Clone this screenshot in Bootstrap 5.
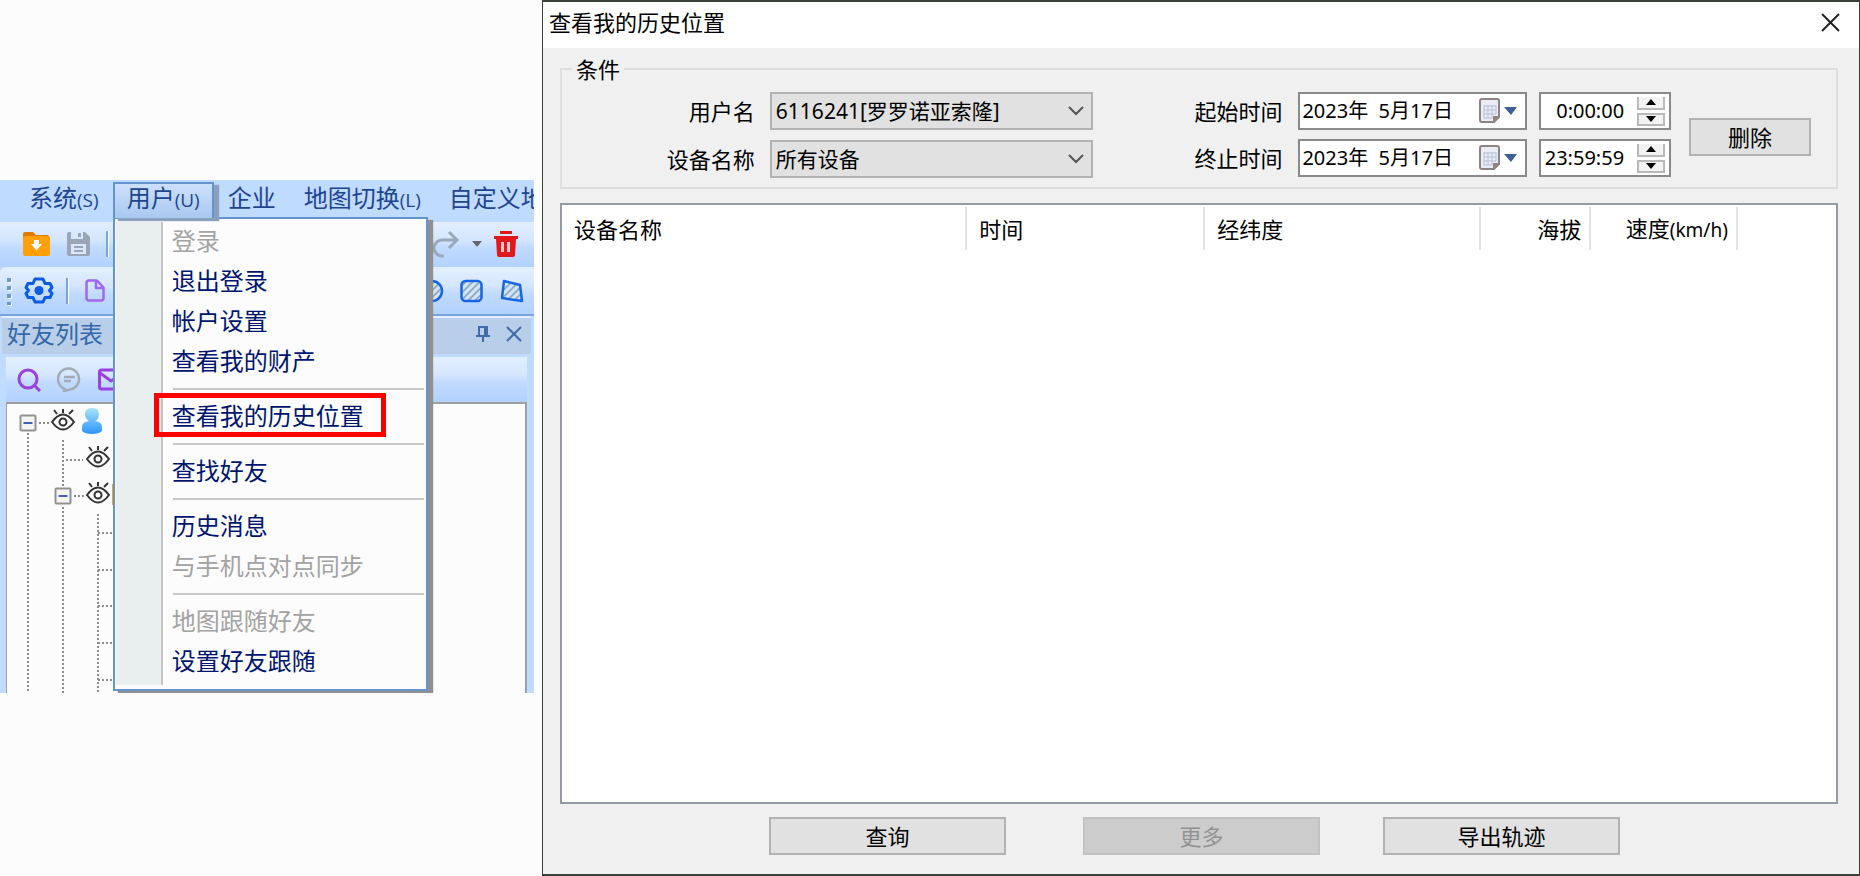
<!DOCTYPE html>
<html lang="zh-CN">
<head>
<meta charset="utf-8">
<meta name="viewport" content="width=device-width, initial-scale=1">
<title>查看我的历史位置</title>
<link href="https://cdn.jsdelivr.net/npm/bootstrap@5.3.0/dist/css/bootstrap.min.css" rel="stylesheet">
<style>
  body { background: #fcfcfc; color: #000; font: 22px/30px "Noto Sans", "Noto Sans CJK SC", sans-serif; }
  button { padding: 0; border: 0; background: none; color: inherit; line-height: 1; }
  svg { display: block; }
  .workspace { display: grid; grid-template-columns: 534fr 1318fr; column-gap: 8px; min-height: 100vh; }

  /* main application window */
  .app-pane { margin-top: 180px; overflow: hidden; align-self: start; background: #bfdbff; font-size: 24px; }
  .menubar { height: 42px; padding-left: 15px; list-style: none; color: #1f4590; }
  .menubar > li { position: relative; flex: none; height: 42px; }
  .menubar .top-link { display: block; height: 36px; margin-top: 2px; padding: 0 14px; line-height: 32px; color: inherit; text-decoration: none; white-space: nowrap; }
  .menubar small { font: 19px "Open Sans", sans-serif; }
  .menubar .open { position: relative; z-index: 6; background: linear-gradient(#cfe1fb, #a9c8f0); box-shadow: inset 2px 2px #6593cf, inset -2px 0 #6593cf, 5px 3px 1px #8ba0bd; }
  .user-menu { position: absolute; z-index: 5; top: 37px; left: 0; width: 315px; padding: 2px 2px 8px; border: 2px solid #6593cf; background: #fcfcfc; box-shadow: 5px 3px 1px #909090; list-style: none; }
  .user-menu::before { content: ""; position: absolute; top: 3px; bottom: 4px; left: 1px; width: 47px; background: #e9eeee; border-right: 2px solid #c5c5c5; }
  .user-menu li { position: relative; }
  .user-menu button { display: block; width: 100%; height: 40px; padding-left: 55px; text-align: left; color: #00156e; }
  .user-menu button:disabled { color: #a3a3a3; }
  .user-menu .rule { height: 2px; margin: 7px 0 6px 56px; background: #c8c8c8; }
  .user-menu .marked { position: absolute; inset: -3px 38px -1px 37px; border: 5px solid #f00; pointer-events: none; }
  .toolstrip { background: linear-gradient(#e3efff, #d5e6ff 40%, #c2dbff 55%, #b1d2ff); }
  .strip-a { height: 45px; padding: 0 16px 2px 22px; }
  .strip-b { height: 49px; padding: 0 10px 0 6px; border-bottom: 2px solid #79a3dc; border-radius: 6px 0 0 0; }
  .divider { width: 3px; height: 26px; border-left: 2px solid #7ba3da; border-right: 1px solid #fff; }
  .panel-title { height: 38px; margin: 0 3px 0 2px; padding: 0 9px 4px 5px; border-top: 2px solid #e3efff; background: #b8cee9; color: #3468a8; line-height: 30px; }
  .panel-title h2 { font-size: 24px; line-height: 30px; }
  .panel-body { padding: 3px 7px 0 6px; }
  .panel-tools { height: 45px; padding-left: 11px; }
  .tree-box { height: 291px; border: 2px solid #a0a0a0; border-width: 2px 2px 0 1px; background: #fcfcfc; overflow: hidden; }

  /* history dialog */
  .dialog { display: flex; flex-direction: column; min-width: 0; background: #f0f0f0; border: 1px solid #3c413c; border-top-width: 2px; border-bottom-width: 2px; }
  .titlebar { height: 46px; padding: 0 19px 6px 6px; background: #fff; }
  .titlebar h1 { font-size: 22px; line-height: 30px; }
  .dialog-body { padding: 10px 21px 19px 17px; }
  fieldset.criteria { padding: 12px 0 9px; border: 2px solid #dedede; }
  .criteria legend { float: none; width: auto; margin: 0 0 0 10px; padding: 0 4px; font-size: 22px; line-height: 22px; }
  .criteria-grid { display: grid; grid-template-columns: 531fr 579fr 165fr; }
  .pick-grid { display: grid; grid-template-columns: 193fr 323fr; gap: 10px 15px; }
  .span-grid { display: grid; grid-template-columns: 194fr 229fr 132fr; gap: 8px 12px; }
  .pick-grid label, .span-grid label { text-align: right; line-height: 38px; white-space: nowrap; }
  .span-grid label { padding-right: 4px; }
  .win-select { height: 38px; min-width: 0; padding: 0 36px 0 4px; border: 2px solid #b2b2b2; border-radius: 0; color: #000; font-size: 21px; line-height: 30px;
    background: #e1e1e1 url("data:image/svg+xml,%3Csvg xmlns='http://www.w3.org/2000/svg' width='16' height='10'%3E%3Cpath d='M1 1l7 7 7-7' fill='none' stroke='%23555' stroke-width='2'/%3E%3C/svg%3E") no-repeat right 7px center / 16px 10px; }
  .win-field { display: flex; align-items: center; height: 38px; min-width: 0; border: 2px solid #8a8a8a; background: #fff; }
  .win-field input { flex: 1; width: 0; min-width: 0; padding: 0 0 0 2px; border: 0; background: none; font-size: 20px; line-height: 30px; }
  .win-field .clock { padding: 0 13px 0 0; text-align: right; }
  .spin { display: grid; gap: 3px; margin-right: 4px; }
  .spin button { display: grid; place-items: center; width: 28px; height: 13px; border: 2px solid #b9b9b9; background: #f3f3f3; }
  .spin button:first-child { border-top: 0; }
  .win-btn { height: 38px; border: 2px solid #b2b2b2; background: #e1e1e1; white-space: nowrap; }
  .win-btn:disabled { border-color: #c2c2c2; background: #ccc; color: #929292; }
  .delete-cell { padding: 0 25px 0 18px; }
  .result-box { flex: 1; margin-top: 14px; border: 2px solid #959ba5; background: #fff; }
  .result-box table { width: 100%; table-layout: fixed; }
  .result-box th { height: 47px; padding: 0 10px 0 12px; font-weight: 400; white-space: nowrap; background: linear-gradient(#e3e3e3, #e3e3e3) no-repeat right 2px / 2px 43px; }
  .result-box th:last-child { background: none; }
  .result-box small { font-size: 19px; }
  .actions { display: grid; grid-template-columns: 209fr 237fr 77fr 237fr 63fr 237fr 218fr; margin-top: 13px; }
  .actions .win-btn:nth-child(1) { grid-column: 2; }
  .actions .win-btn:nth-child(2) { grid-column: 4; }
  .actions .win-btn:nth-child(3) { grid-column: 6; }
</style>
<script src="https://cdn.jsdelivr.net/npm/bootstrap@5.3.0/dist/js/bootstrap.bundle.min.js"></script>
</head>
<body>
<svg width="0" height="0" class="position-absolute" aria-hidden="true">
  <defs>
    <g id="calendar">
      <path d="M3 1h15q2 0 2 2v16l-5 5H3q-2 0-2-2V3q0-2 2-2z" fill="#e9edf5" stroke="#8f8280" stroke-width="2"/>
      <path d="M5 8h12M5 12h12M5 16h12M5 20h8M5 7v13M9 7v13M13 7v13M17 7v9" stroke="#b3c0d6" fill="none"/>
      <path d="M20 18l-6 6v-6z" fill="#8f8280"/>
      <path d="M25 9h13l-6 8z" fill="#3d5f94"/>
    </g>
    <pattern id="hatch" width="5" height="5" patternUnits="userSpaceOnUse" patternTransform="rotate(45)"><rect width="5" height="5" fill="#d8e5f5"/><path d="M1 0v5" stroke="#8fb0c8" stroke-width="2"/></pattern>
  </defs>
</svg>
<main class="workspace">
  <section class="app-pane" aria-label="主窗口">
    <ul class="menubar d-flex mb-0">
      <li><a class="top-link" href="#">系统<small>(S)</small></a></li>
      <li>
        <a class="top-link open" href="#">用户<small>(U)</small></a>
        <ul class="user-menu">
          <li><button type="button" disabled>登录</button></li>
          <li><button type="button">退出登录</button></li>
          <li><button type="button">帐户设置</button></li>
          <li><button type="button">查看我的财产</button></li>
          <li class="rule"></li>
          <li><button type="button">查看我的历史位置</button><span class="marked"></span></li>
          <li class="rule"></li>
          <li><button type="button">查找好友</button></li>
          <li class="rule"></li>
          <li><button type="button">历史消息</button></li>
          <li><button type="button" disabled>与手机点对点同步</button></li>
          <li class="rule"></li>
          <li><button type="button" disabled>地图跟随好友</button></li>
          <li><button type="button">设置好友跟随</button></li>
        </ul>
      </li>
      <li><a class="top-link" href="#">企业</a></li>
      <li><a class="top-link" href="#">地图切换<small>(L)</small></a></li>
      <li><a class="top-link pe-0" href="#">自定义地</a></li>
    </ul>

    <div class="toolstrip strip-a d-flex align-items-center">
      <button type="button" aria-label="打开">
        <svg width="29" height="24" viewBox="0 0 29 24"><path d="M1 2q0-2 2-2h8l3 3h11q2 0 2 2v3H1z" fill="#e07a00"/><rect x="1" y="4" width="27" height="20" rx="2" fill="#ffa00a"/><path d="M12 8h5v4h3l-5.500 6.500L9 12h3z" fill="#fff"/></svg>
      </button>
      <button type="button" class="ms-3" aria-label="保存">
        <svg width="23" height="24" viewBox="0 0 23 24"><path d="M2 0h2v7h12V0h2l5 5v17q0 2-2 2H2q-2 0-2-2V2q0-2 2-2z" fill="#98a6b6"/><path d="M4 12h15v10H4z" fill="#dbe8fa"/><path d="M11 1h3v4h-3zM7 14h9v2H7zM7 18h9v2H7z" fill="#98a6b6"/></svg>
      </button>
      <span class="divider ms-3"></span>
      <button type="button" class="ms-auto" aria-label="重做">
        <svg width="28" height="28" viewBox="0 0 28 28" fill="none" stroke="#9aa9ba" stroke-width="3"><path d="M12 26h-2a8 8 0 0 1 0-16h15M17 2l8 8-8 8"/></svg>
      </button>
      <button type="button" class="mx-2 px-1" aria-label="更多重做"><svg width="10" height="6"><path d="M0 0h10L5 6z" fill="#666"/></svg></button>
      <button type="button" aria-label="删除">
        <svg width="24" height="26" viewBox="0 0 24 26"><path d="M6 0h12v3H6zM0 5h24v3h-2l-1 16q0 2-2 2H5q-2 0-2-2L2 8H0z" fill="#e2191b"/><path d="M7 11h3v10H7zM13 11h3v10h-3z" fill="#f6c9d2"/></svg>
      </button>
    </div>

    <div class="toolstrip strip-b d-flex align-items-center">
      <svg width="6" height="30" aria-hidden="true"><path d="M4 3v27" stroke="#fff" stroke-width="4" stroke-dasharray="4 4"/><path d="M3 2v27" stroke="#6f97cf" stroke-width="4" stroke-dasharray="4 4"/></svg>
      <button type="button" class="mx-2 ps-1 pe-1" aria-label="设置">
        <svg width="30" height="27" viewBox="-1 0 30 27"><path d="M10 2h8l2 4.500h5l2 4-2.500 3 2.500 3-2 4h-5L18 25h-8l-2-4.500H3l-2-4 2.500-3-2.500-3 2-4h5z" fill="none" stroke="#0a5be8" stroke-width="3" stroke-linejoin="round"/><circle cx="14" cy="13.500" r="4.500" fill="#0a5be8"/></svg>
      </button>
      <span class="divider"></span>
      <button type="button" class="ms-3" aria-label="新建">
        <svg width="20" height="23" viewBox="0 0 20 23"><path d="M4 1.500h8l6.500 7V19q0 2.500-2.500 2.500H4Q1.500 21.500 1.500 19V4Q1.500 1.500 4 1.500zM11 2v7h7" fill="none" stroke="#a067f5" stroke-width="2.500" stroke-linejoin="round"/></svg>
      </button>
      <button type="button" class="ms-auto" aria-label="圆形"><svg width="23" height="24"><circle cx="11" cy="12" r="10" fill="url(#hatch)" stroke="#1565e6" stroke-width="2.500"/></svg></button>
      <button type="button" class="ms-3" aria-label="矩形"><svg width="23" height="24"><rect x="1.500" y="2" width="20" height="20" rx="4" fill="url(#hatch)" stroke="#1565e6" stroke-width="2.500"/></svg></button>
      <button type="button" class="ms-3" aria-label="多边形"><svg width="25" height="24"><path d="M5 2l16 4 2 16-20-3z" fill="url(#hatch)" stroke="#1565e6" stroke-width="2.500" stroke-linejoin="round"/></svg></button>
    </div>

    <div class="panel-title d-flex align-items-center">
      <h2 class="fw-normal mb-0">好友列表</h2>
      <button type="button" class="ms-auto me-3" aria-label="固定"><svg width="14" height="17" fill="none" stroke="#3f6cab" stroke-width="2"><path d="M3 1h8v9H3zM9 1v9M0 10h14M7 10v6"/></svg></button>
      <button type="button" aria-label="关闭面板"><svg width="16" height="16" stroke="#3f6cab" stroke-width="2"><path d="M1 1l14 14M15 1L1 15"/></svg></button>
    </div>

    <div class="panel-body">
      <div class="toolstrip panel-tools d-flex align-items-center gap-3">
        <button type="button" aria-label="查找"><svg width="24" height="24" fill="none" stroke="#9a41e0" stroke-width="3"><circle cx="11" cy="11" r="9"/><path d="M17 17l6 6"/></svg></button>
        <button type="button" aria-label="消息"><svg width="25" height="25" fill="none" stroke="#a3abb5" stroke-width="2.500"><path d="M8 22a10.500 10.500 0 1 1 7 0l-8 2zM7 10h11M7 14h7" stroke-linejoin="round"/></svg></button>
        <button type="button" aria-label="邮件"><svg width="27" height="23" fill="none" stroke="#9a41e0" stroke-width="3"><rect x="1.500" y="2" width="24" height="19" rx="2"/><path d="M2 5l11 8 12-8"/></svg></button>
      </div>
      <div class="tree-box">
        <svg width="320" height="289" role="img" aria-label="好友树">
          <defs>
            <g id="eye" fill="none" stroke="#333" stroke-width="2"><path d="M-11 0Q0-15 11 0Q0 15-11 0z"/><circle r="3.500"/><path d="M0-9v-4M-6-8l-3-4M6-8l4-4"/></g>
            <g id="fold"><rect x="-7.500" y="-7.500" width="15" height="15" rx="1" fill="#f4f4f4" stroke="#929292" stroke-width="2"/><path d="M-4.500 0h9" stroke="#3b62b5" stroke-width="2"/></g>
            <linearGradient id="person" x2="0" y2="1"><stop stop-color="#a5e4f8"/><stop offset="1" stop-color="#2e94fb"/></linearGradient>
          </defs>
          <g fill="none" stroke="#8c8c8c" stroke-width="2" stroke-dasharray="2 2">
            <path d="M21 29v260M56 36v46M56 103v186M91 110v180M32 19h10M59 56h17M67 92h10M91 129h30M91 166h30M91 202h30M91 239h30M91 276h30"/>
          </g>
          <use href="#fold" x="21" y="19"/><use href="#fold" x="56" y="92"/>
          <use href="#eye" x="56" y="18"/><use href="#eye" x="91" y="55"/><use href="#eye" x="91" y="91"/>
          <path d="M85 4q7 0 7 6-1 7-4 7 7 1 7 6v4q-3 3-10 3t-10-3v-4q0-5 7-6-4-2-4-7 0-6 7-6z" fill="url(#person)"/>
          <rect x="105" y="80" width="24" height="21" fill="#f5a514"/>
        </svg>
      </div>
    </div>
  </section>

  <section class="dialog" aria-labelledby="dlg-title">
    <header class="titlebar d-flex align-items-center justify-content-between">
      <h1 id="dlg-title" class="fw-normal mb-0">查看我的历史位置</h1>
      <button type="button" aria-label="关闭"><svg width="19" height="19" stroke="#222" stroke-width="2"><path d="M1 1l17 17M18 1L1 18"/></svg></button>
    </header>
    <div class="dialog-body d-flex flex-column flex-grow-1">
      <fieldset class="criteria">
        <legend>条件</legend>
        <div class="criteria-grid">
          <div class="pick-grid">
            <label for="user">用户名</label>
            <select id="user" class="form-select win-select"><option>6116241[罗罗诺亚索隆]</option></select>
            <label for="device">设备名称</label>
            <select id="device" class="form-select win-select"><option>所有设备</option></select>
          </div>
          <div class="span-grid">
            <label for="from-date">起始时间</label>
            <div class="win-field">
              <input id="from-date" type="text" value="2023年&nbsp; 5月17日">
              <button type="button" class="me-2" aria-label="选择起始日期"><svg width="38" height="26"><use href="#calendar"/></svg></button>
            </div>
            <div class="win-field">
              <input class="clock" type="text" value="0:00:00" aria-label="起始时刻">
              <div class="spin"><button type="button" aria-label="增加"><svg width="10" height="6"><path d="M0 6h10L5 0z"/></svg></button><button type="button" aria-label="减少"><svg width="10" height="6"><path d="M0 0h10L5 6z"/></svg></button></div>
            </div>
            <label for="to-date">终止时间</label>
            <div class="win-field">
              <input id="to-date" type="text" value="2023年&nbsp; 5月17日">
              <button type="button" class="me-2" aria-label="选择终止日期"><svg width="38" height="26"><use href="#calendar"/></svg></button>
            </div>
            <div class="win-field">
              <input class="clock" type="text" value="23:59:59" aria-label="终止时刻">
              <div class="spin"><button type="button" aria-label="增加"><svg width="10" height="6"><path d="M0 6h10L5 0z"/></svg></button><button type="button" aria-label="减少"><svg width="10" height="6"><path d="M0 0h10L5 6z"/></svg></button></div>
            </div>
          </div>
          <div class="delete-cell d-flex align-items-center"><button type="button" class="win-btn flex-grow-1 mt-1">删除</button></div>
        </div>
      </fieldset>

      <div class="result-box">
        <table>
          <colgroup><col style="width:31.800%"><col style="width:18.700%"><col style="width:21.600%"><col style="width:8.700%"><col style="width:11.500%"><col></colgroup>
          <thead><tr><th scope="col">设备名称</th><th scope="col">时间</th><th scope="col">经纬度</th><th scope="col" class="text-end">海拔</th><th scope="col" class="text-end">速度<small>(km/h)</small></th><th></th></tr></thead>
          <tbody></tbody>
        </table>
      </div>

      <div class="actions">
        <button type="button" class="win-btn">查询</button>
        <button type="button" class="win-btn" disabled>更多</button>
        <button type="button" class="win-btn">导出轨迹</button>
      </div>
    </div>
  </section>
</main>
</body>
</html>
